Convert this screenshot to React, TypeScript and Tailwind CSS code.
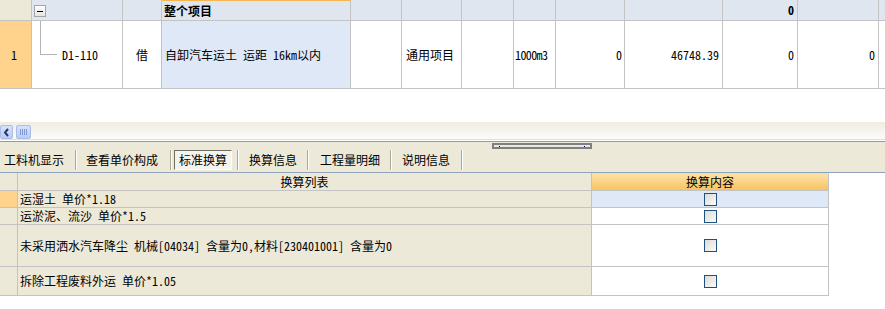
import React from "react";

const font = { fontFamily: '"Noto Sans Mono CJK SC", "Noto Sans CJK SC", "Liberation Sans", sans-serif' };

function Checkbox() {
  return (
    <div className="w-[13px] h-[13px] border border-[#1c5180] bg-gradient-to-br from-[#dcdbd3] to-[#fbfbf9]" />
  );
}

export default function App() {
  const line = "border-[#c3c3c3]";
  return (
    <div className="w-[885px] h-[309px] bg-white overflow-hidden text-[12px] leading-none text-black" style={font}>
      {/* top grid header */}
      <div className={`flex h-[21px] border-b ${line} bg-[#dfe6f0]`}>
        <div className={`w-[32px] shrink-0 border-r ${line} bg-[#ece9d8]`} />
        <div className={`w-[91px] shrink-0 border-r ${line} flex items-start pt-[5px] pl-[2px]`}>
          <div className="w-[12px] h-[12px] border border-[#a5a5a5] bg-gradient-to-b from-white to-[#e4e4e4] flex items-center justify-center">
            <div className="w-[6px] h-[1px] bg-black" />
          </div>
        </div>
        <div className={`w-[39px] shrink-0 border-r ${line}`} />
        <div className={`w-[189px] shrink-0 border-r ${line} border-t border-t-[#f6b54e] flex items-center pl-[2px] font-bold`}>整个项目</div>
        <div className={`w-[51px] shrink-0 border-r ${line}`} />
        <div className={`w-[60px] shrink-0 border-r ${line}`} />
        <div className={`w-[52px] shrink-0 border-r ${line}`} />
        <div className={`w-[42px] shrink-0 border-r ${line}`} />
        <div className={`w-[69px] shrink-0 border-r ${line}`} />
        <div className={`w-[98px] shrink-0 border-r ${line}`} />
        <div className={`w-[75px] shrink-0 border-r ${line} flex items-center justify-end pr-[3px] font-bold`}>0</div>
        <div className={`w-[81px] shrink-0 border-r ${line}`} />
        <div className="flex-1" />
      </div>
      {/* top grid row 1 */}
      <div className={`flex h-[68px] border-b ${line}`}>
        <div className={`w-[32px] shrink-0 border-r ${line} bg-[#ffd38c] flex items-center pl-[11px]`}>1</div>
        <div className={`w-[91px] shrink-0 border-r ${line} flex items-center`}>
          <div className="self-start ml-[8px] w-[17px] h-[34px] border-l border-b border-[#b4b4b4]" />
          <span className="ml-[5px]">D1-110</span>
        </div>
        <div className={`w-[39px] shrink-0 border-r ${line} flex items-center justify-center`}>借</div>
        <div className={`w-[189px] shrink-0 border-r ${line} bg-[#dfe8f6] flex items-center pl-[3px] whitespace-pre`}>自卸汽车运土 运距 16km以内</div>
        <div className={`w-[51px] shrink-0 border-r ${line}`} />
        <div className={`w-[60px] shrink-0 border-r ${line} flex items-center pl-[4px]`}>通用项目</div>
        <div className={`w-[52px] shrink-0 border-r ${line}`} />
        <div className={`w-[42px] shrink-0 border-r ${line} flex items-center pl-[1px] tracking-[-0.6px]`}>1000m3</div>
        <div className={`w-[69px] shrink-0 border-r ${line} flex items-center justify-end pr-[2px]`}>0</div>
        <div className={`w-[98px] shrink-0 border-r ${line} flex items-center justify-end pr-[3px]`}>46748.39</div>
        <div className={`w-[75px] shrink-0 border-r ${line} flex items-center justify-end pr-[3px]`}>0</div>
        <div className={`w-[81px] shrink-0 border-r ${line} flex items-center justify-end pr-[3px]`}>0</div>
        <div className="flex-1" />
      </div>
      <div className="h-[33px]" />
      {/* horizontal scrollbar */}
      <div className="h-[17px] bg-gradient-to-b from-[#eeece3] to-[#fcfcfa] flex items-end gap-[3px]">
        <div className="w-[13px] h-[14px] rounded-[2px] border border-[#a9bde6] bg-gradient-to-b from-[#d6e2fb] to-[#b8ccf4] flex items-center justify-center">
          <svg width="7" height="9" viewBox="0 0 7 9">
            <path d="M5 1 L2 4.5 L5 8" stroke="#223a6e" strokeWidth="2" fill="none" />
          </svg>
        </div>
        <div className="w-[15px] h-[14px] rounded-[2px] border border-[#a9bde6] bg-gradient-to-b from-[#d6e2fb] to-[#b8ccf4] flex items-center justify-center gap-[1px]">
          <div className="w-[1px] h-[6px] bg-[#7f99d6]" />
          <div className="w-[1px] h-[6px] bg-[#7f99d6]" />
          <div className="w-[1px] h-[6px] bg-[#7f99d6]" />
          <div className="w-[1px] h-[6px] bg-[#7f99d6]" />
        </div>
      </div>
      <div className="h-[1px] bg-[#e3e1d6]" />
      <div className="h-[1px] bg-white" />
      {/* tab bar */}
      <div className="h-[32px] border-t border-b border-t-[#7f9ec7] border-b-[#8fa3bd] bg-[#ece9d8] flex flex-col">
        <div className="flex justify-start pl-[492px] pt-[1px]">
          <div className="w-[100px] h-[6px] border-2 border-[#808080] bg-[#ece9d8] flex items-center justify-between px-[5px]">
            <div className="w-[1px] h-[1px] bg-[#000080]" />
            <div className="w-[1px] h-[1px] bg-[#000080]" />
          </div>
        </div>
        <div className="flex items-center h-[20px] mt-[1px] text-[12px]">
          <span className="ml-[4px]">工料机显示</span>
          <div className="ml-[11px] w-[2px] h-[20px] border-l border-[#aca899] border-r border-r-white" />
          <span className="ml-[9px]">查看单价构成</span>
          <div className="ml-[12px] w-[2px] h-[20px] border-l border-[#aca899] border-r border-r-white" />
          <div className="ml-[2px] w-[58px] h-[20px] border border-t-[#716f64] border-l-[#716f64] border-b-white border-r-white bg-[#f4f3ee] flex items-center justify-center">标准换算</div>
          <div className="ml-[5px] w-[2px] h-[20px] border-l border-[#aca899] border-r border-r-white" />
          <span className="ml-[10px]">换算信息</span>
          <div className="ml-[10px] w-[2px] h-[20px] border-l border-[#aca899] border-r border-r-white" />
          <span className="ml-[11px]">工程量明细</span>
          <div className="ml-[10px] w-[2px] h-[20px] border-l border-[#aca899] border-r border-r-white" />
          <span className="ml-[10px]">说明信息</span>
          <div className="ml-[11px] w-[2px] h-[20px] border-l border-[#aca899] border-r border-r-white" />
        </div>
      </div>
      {/* bottom grid */}
      <div className="w-[829px]">
        <div className={`flex h-[18px] border-b ${line}`}>
          <div className={`w-[18px] shrink-0 border-r ${line} bg-[#ece9d8]`} />
          <div className={`w-[574px] shrink-0 border-r ${line} bg-[#ece9d8] flex items-center justify-center`}>换算列表</div>
          <div className={`w-[237px] shrink-0 border-r ${line} border-t border-t-[#f8d9a0] bg-gradient-to-b from-[#fde2a6] to-[#f6c461] flex items-center justify-center`}>换算内容</div>
        </div>
        <div className={`flex h-[17px] border-b ${line}`}>
          <div className={`w-[18px] shrink-0 border-r ${line} bg-[#ffd38c]`} />
          <div className={`w-[574px] shrink-0 border-r ${line} bg-[#ece9d8] flex items-center pl-[2px] whitespace-pre`}>运湿土 单价*1.18</div>
          <div className={`w-[237px] shrink-0 border-r ${line} bg-[#dfe8f6] flex items-center justify-center`}><Checkbox /></div>
        </div>
        <div className={`flex h-[17px] border-b ${line}`}>
          <div className={`w-[18px] shrink-0 border-r ${line} bg-[#ece9d8]`} />
          <div className={`w-[574px] shrink-0 border-r ${line} bg-[#ece9d8] flex items-center pl-[2px] whitespace-pre`}>运淤泥、流沙 单价*1.5</div>
          <div className={`w-[237px] shrink-0 border-r ${line} bg-white flex items-center justify-center`}><Checkbox /></div>
        </div>
        <div className={`flex h-[42px] border-b ${line}`}>
          <div className={`w-[18px] shrink-0 border-r ${line} bg-[#ece9d8]`} />
          <div className={`w-[574px] shrink-0 border-r ${line} bg-[#ece9d8] flex items-center pl-[2px] whitespace-pre`}>未采用洒水汽车降尘 机械[04034] 含量为0,材料[230401001] 含量为0</div>
          <div className={`w-[237px] shrink-0 border-r ${line} bg-white flex items-center justify-center`}><Checkbox /></div>
        </div>
        <div className={`flex h-[29px] border-b ${line}`}>
          <div className={`w-[18px] shrink-0 border-r ${line} bg-[#ece9d8]`} />
          <div className={`w-[574px] shrink-0 border-r ${line} bg-[#ece9d8] flex items-center pl-[2px] whitespace-pre`}>拆除工程废料外运 单价*1.05</div>
          <div className={`w-[237px] shrink-0 border-r ${line} bg-white flex items-center justify-center`}><Checkbox /></div>
        </div>
      </div>
    </div>
  );
}
